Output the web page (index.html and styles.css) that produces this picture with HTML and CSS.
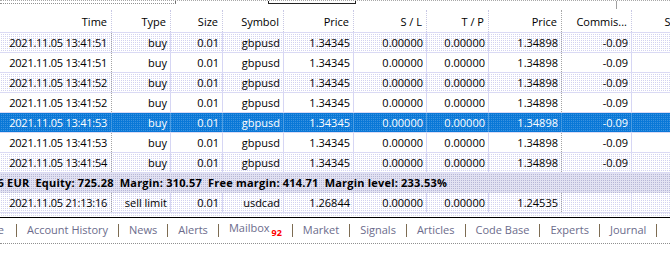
FILE: index.html
```html
<!DOCTYPE html>
<html>
<head>
<meta charset="utf-8">
<link rel="stylesheet" href="styles.css">
</head>
<body>
<div class="window">
  <div class="topstrip">
    <div class="tb tb1"></div>
    <div class="tb tb2"></div>
    <div class="tb tb3"></div>
  </div>
  <div class="grid">
    <div class="row head">
      <div class="c c1">Time</div><div class="c">Type</div><div class="c">Size</div><div class="c">Symbol</div><div class="c">Price</div><div class="c">S / L</div><div class="c">T / P</div><div class="c c8">Price</div><div class="c">Commis...</div><div class="c">Swap</div>
    </div>
    <div class="row odd">
      <div class="c c1">2021.11.05 13:41:51</div><div class="c">buy</div><div class="c">0.01</div><div class="c">gbpusd</div><div class="c">1.34345</div><div class="c">0.00000</div><div class="c">0.00000</div><div class="c c8">1.34898</div><div class="c">-0.09</div><div class="c"></div>
    </div>
    <div class="row even">
      <div class="c c1">2021.11.05 13:41:51</div><div class="c">buy</div><div class="c">0.01</div><div class="c">gbpusd</div><div class="c">1.34345</div><div class="c">0.00000</div><div class="c">0.00000</div><div class="c c8">1.34898</div><div class="c">-0.09</div><div class="c"></div>
    </div>
    <div class="row odd">
      <div class="c c1">2021.11.05 13:41:52</div><div class="c">buy</div><div class="c">0.01</div><div class="c">gbpusd</div><div class="c">1.34345</div><div class="c">0.00000</div><div class="c">0.00000</div><div class="c c8">1.34898</div><div class="c">-0.09</div><div class="c"></div>
    </div>
    <div class="row even">
      <div class="c c1">2021.11.05 13:41:52</div><div class="c">buy</div><div class="c">0.01</div><div class="c">gbpusd</div><div class="c">1.34345</div><div class="c">0.00000</div><div class="c">0.00000</div><div class="c c8">1.34898</div><div class="c">-0.09</div><div class="c"></div>
    </div>
    <div class="row selected">
      <div class="c c1">2021.11.05 13:41:53</div><div class="c">buy</div><div class="c">0.01</div><div class="c">gbpusd</div><div class="c">1.34345</div><div class="c">0.00000</div><div class="c">0.00000</div><div class="c c8">1.34898</div><div class="c">-0.09</div><div class="c"></div>
    </div>
    <div class="row even">
      <div class="c c1">2021.11.05 13:41:53</div><div class="c">buy</div><div class="c">0.01</div><div class="c">gbpusd</div><div class="c">1.34345</div><div class="c">0.00000</div><div class="c">0.00000</div><div class="c c8">1.34898</div><div class="c">-0.09</div><div class="c"></div>
    </div>
    <div class="row odd">
      <div class="c c1">2021.11.05 13:41:54</div><div class="c">buy</div><div class="c">0.01</div><div class="c">gbpusd</div><div class="c">1.34345</div><div class="c">0.00000</div><div class="c">0.00000</div><div class="c c8">1.34898</div><div class="c">-0.09</div><div class="c"></div>
    </div>
    <div class="summary">
      <span class="clip"><span>Balance: 1 035.86</span></span><span class="sumtext"> EUR  Equity: 725.28  Margin: 310.57  Free margin: 414.71  Margin level: 233.53%</span>
    </div>
    <div class="row odd">
      <div class="c c1">2021.11.05 21:13:16</div><div class="c">sell limit</div><div class="c">0.01</div><div class="c">usdcad</div><div class="c">1.26844</div><div class="c">0.00000</div><div class="c">0.00000</div><div class="c c8">1.24535</div><div class="c"></div><div class="c"></div>
    </div>
  </div>
  <div class="tabs">
    <span class="clip"><span>Trade</span></span><i class="sep"></i>
    <span class="tab">Account History</span><i class="sep"></i>
    <span class="tab">News</span><i class="sep"></i>
    <span class="tab">Alerts</span><i class="sep"></i>
    <span class="tab">Mailbox<span class="badge">92</span></span><i class="sep"></i>
    <span class="tab">Market</span><i class="sep"></i>
    <span class="tab">Signals</span><i class="sep"></i>
    <span class="tab">Articles</span><i class="sep"></i>
    <span class="tab">Code Base</span><i class="sep"></i>
    <span class="tab">Experts</span><i class="sep"></i>
    <span class="tab">Journal</span><i class="sep"></i>
  </div>
</div>
</body>
</html>
```
FILE: styles.css
```css
html, body {
  margin: 0;
  padding: 0;
  background: #fff;
}
body {
  width: 670px;
  height: 267px;
  overflow: hidden;
  font-family: "Open Sans", "Liberation Sans", sans-serif;
  font-size: 11px;
  color: #000;
}
.window {
  width: 670px;
  overflow: hidden;
}
.topstrip {
  height: 10px;
  display: flex;
  align-items: flex-start;
  border-top: 1px dotted #a8a8a8;
  box-sizing: border-box;
}
.tb {
  box-sizing: border-box;
  height: 3px;
}
.tb1 {
  width: 176px;
  border-bottom: 1px dotted #909090;
  border-right: 1px solid #707070;
}
.tb2 {
  margin-left: 92px;
  width: 88px;
  border: 1px solid #222;
  border-top: none;
}
.tb3 {
  margin-left: 260px;
  width: 1px;
  height: 8px;
  background: #a0a0a0;
}
.grid {
  height: 207px;
  overflow: hidden;
  width: 697px;
  background: #fff conic-gradient(from 90deg at 1px 1px, #d6d6f2 90deg, transparent 0) 0 0 / 2px 2px;
}
.row {
  display: grid;
  grid-template-columns: 112px 59px 52px 61px 70px 73px 62px 73px 70px 65px;
  height: 20px;
  box-sizing: border-box;
  border-bottom: 1px solid #dadaf4;
  line-height: 19px;
}
.c {
  text-align: right;
  padding-right: 3px;
  white-space: nowrap;
  overflow: hidden;
  border-right: 1px solid #d6d6f4;
}
.c.c1 {
  padding-right: 4px;
  letter-spacing: -0.25px;
}
.c1, .c8 {
  border-right: 1px dotted #a4a4a4;
}
.head {
  height: 23px;
  line-height: 23px;
  background: #fff;
}
.head .c {
  padding-right: 4px;
  border-right: 1px dotted #c8c8e4;
}
.head .c.c1 {
  letter-spacing: 0;
}
.head .c8 {
  border-right: 1px dotted #a8a8a8;
}
.odd {
  background: #fff conic-gradient(from 90deg at 1px 1px, #d2d2f0 90deg, transparent 0) 0 0 / 2px 2px;
}
.even {
  background: #fff;
}
.selected {
  background: #0a78d7 conic-gradient(from 90deg at 1px 1px, #3a92e0 90deg, transparent 0) 0 0 / 2px 2px;
  color: #fff;
}
.selected .c {
  border-right-color: #4c9ce2;
}
.summary {
  height: 20px;
  line-height: 19px;
  display: flex;
  font-weight: bold;
  white-space: pre;
  letter-spacing: 0.2px;
  background: #e2e2f2 conic-gradient(from 90deg at 1px 1px, #b6b6d6 90deg, transparent 0) 0 0 / 2px 2px;
}
.clip {
  display: flex;
  justify-content: flex-end;
  overflow: hidden;
  white-space: pre;
  flex: none;
}
.summary .clip {
  width: 4px;
}
.tabs {
  height: 27px;
  box-sizing: border-box;
  border-top: 1px solid #000;
  border-bottom: 1px dotted #909090;
  padding-bottom: 3px;
  display: flex;
  align-items: center;
  color: #6c6c8c;
  white-space: nowrap;
}
.tabs .clip {
  width: 4px;
  margin-right: 2px;
}
.sep {
  display: block;
  flex: none;
  width: 1px;
  height: 13px;
  background: #7d6c52;
  margin: 2px 10px 0 10px;
}
.tab {
  flex: none;
}
.badge {
  color: #ff0000;
  font-weight: bold;
  font-size: 9px;
  vertical-align: -4px;
  margin-left: 2px;
}
```
